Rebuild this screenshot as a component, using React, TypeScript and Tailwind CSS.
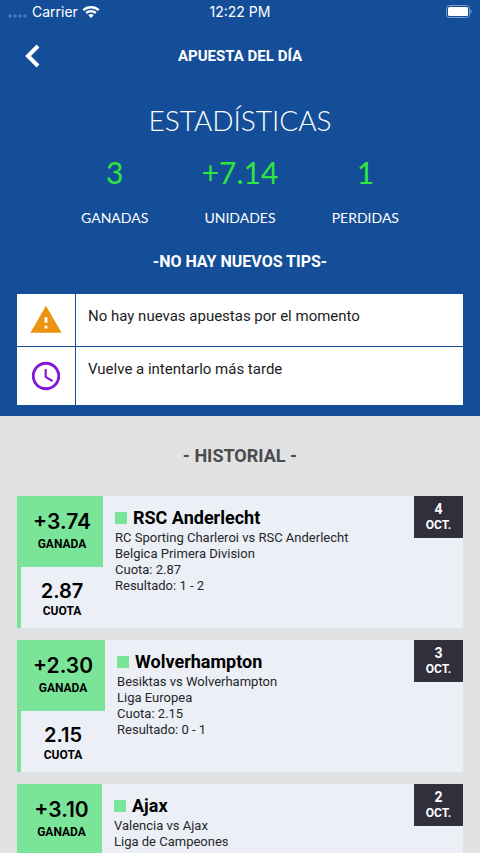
import { MdAccessTime } from "react-icons/md";

const stats = [
  { value: "3", label: "GANADAS" },
  { value: "+7.14", label: "UNIDADES" },
  { value: "1", label: "PERDIDAS" },
];

const history = [
  {
    units: "+3.74",
    odds: "2.87",
    team: "RSC Anderlecht",
    match: "RC Sporting Charleroi vs RSC Anderlecht",
    league: "Belgica Primera Division",
    result: "1 - 2",
    day: "4",
    month: "OCT.",
  },
  {
    units: "+2.30",
    odds: "2.15",
    team: "Wolverhampton",
    match: "Besiktas vs Wolverhampton",
    league: "Liga Europea",
    result: "0 - 1",
    day: "3",
    month: "OCT.",
  },
  {
    units: "+3.10",
    odds: "2.55",
    team: "Ajax",
    match: "Valencia vs Ajax",
    league: "Liga de Campeones",
    result: "0 - 3",
    day: "2",
    month: "OCT.",
  },
];

const StatusBar = () => {
  return (
    <div className="grid h-6 grid-cols-3 items-center px-2 font-[Inter,sans-serif] text-sm text-white">
      <div className="flex items-center">
        <svg className="mt-2 mr-1 h-1 w-5" viewBox="0 0 20 4" fill="#4d7bb8">
          <circle cx="2" cy="2" r="1.7" />
          <circle cx="7" cy="2" r="1.7" />
          <circle cx="12" cy="2" r="1.7" />
          <circle cx="17" cy="2" r="1.7" />
        </svg>
        <span>Carrier</span>
        <svg className="ml-1 h-3.5 w-[18px]" viewBox="0 0 18 14" fill="#fff">
          <path d="M9 1C5.7 1 2.7 2.2.4 4.3l1.7 1.8C4 4.4 6.4 3.5 9 3.5s5 .9 6.9 2.6l1.7-1.8C15.3 2.2 12.3 1 9 1z" />
          <path d="M9 5.1c-2.1 0-4.1.8-5.6 2.2l1.7 1.8c1.1-1 2.4-1.5 3.9-1.5s2.8.5 3.9 1.5l1.7-1.8C13.1 5.9 11.1 5.1 9 5.1z" />
          <path d="M9 9.1c-1 0-2 .4-2.7 1.1L9 13.1l2.7-2.9C11 9.5 10 9.1 9 9.1z" />
        </svg>
      </div>
      <span className="text-center">12:22 PM</span>
      <svg
        className="h-3.5 w-7 justify-self-end"
        viewBox="0 0 28 14"
        fill="none"
      >
        <rect x="2.5" y=".5" width="23" height="12" rx="3" stroke="#7f9fca" />
        <rect x="4" y="2" width="20" height="9" rx="1.5" fill="#fff" />
        <path d="M26.5 4.5v4c.8-.3 1.2-1 1.2-2s-.4-1.7-1.2-2z" fill="#7f9fca" />
      </svg>
    </div>
  );
};

const Header = () => {
  return (
    <header className="grid h-16 grid-cols-[48px_1fr_48px] items-center px-2 text-white">
      <button type="button" aria-label="Volver" className="flex justify-center">
        <svg className="h-6 w-4" viewBox="0 0 16 24" fill="none">
          <path d="M14 2L4 12l10 10" stroke="#fff" strokeWidth="4" />
        </svg>
      </button>
      <h1 className="text-center text-[15px] font-bold">APUESTA DEL DÍA</h1>
    </header>
  );
};

const Stats = () => {
  return (
    <section className="text-center text-white">
      <h2 className="mt-3 font-[Lato,sans-serif] text-[28px] leading-10 font-light">
        ESTADÍSTICAS
      </h2>
      <dl className="mt-2.5 grid grid-cols-3 px-13 font-[Lato,sans-serif]">
        {stats.map((stat) => (
          <div key={stat.label} className="flex flex-col-reverse">
            <dt className="mt-3 text-sm leading-6">{stat.label}</dt>
            <dd className="text-3xl leading-11 text-[#2fe63c]">{stat.value}</dd>
          </div>
        ))}
      </dl>
      <p className="mt-5 text-base leading-6 font-bold">
        -NO HAY NUEVOS TIPS-
      </p>
    </section>
  );
};

const Notices = () => {
  return (
    <ul className="mx-[17px] mt-5 mb-[11px] divide-y divide-[#144e98] bg-white text-[15px] leading-6 text-[#1c1c1e]">
      <li className="flex">
        <div className="flex h-[52px] w-[59px] items-center justify-center border-r border-[#144e98]">
          <svg className="size-[34px]" viewBox="0 0 24 24" fill="#ec9312">
            <path d="M1 21h22L12 2 1 21zm12-3h-2v-2h2v2zm0-4h-2v-4h2v4z" />
          </svg>
        </div>
        <p className="px-3 py-2.5">No hay nuevas apuestas por el momento</p>
      </li>
      <li className="flex">
        <div className="flex h-[58px] w-[59px] items-center justify-center border-r border-[#144e98]">
          <MdAccessTime className="size-[34px] text-[#8316d8]" />
        </div>
        <p className="px-3 py-2.5">Vuelve a intentarlo más tarde</p>
      </li>
    </ul>
  );
};

const HistoryCard = ({ item }: { item: (typeof history)[number] }) => {
  return (
    <li className="flex h-33 items-start border-l-4 border-[#7ae598] bg-[#eceff5] text-black">
      <div className="min-w-[81px] text-center">
        <div className="h-[71px] bg-[#7ae598] px-3 pt-3">
          <p className="font-[Inter,sans-serif] text-[21px] leading-7 font-semibold">
            {item.units}
          </p>
          <p className="text-xs leading-4 font-bold">GANADA</p>
        </div>
        <div className="px-3 pt-2.5">
          <p className="font-[Inter,sans-serif] text-xl leading-7 font-semibold">
            {item.odds}
          </p>
          <p className="text-xs leading-3 font-bold">CUOTA</p>
        </div>
      </div>
      <div className="flex-1 pt-3 pl-3 text-[13px] leading-4 text-[#26262c]">
        <h3 className="mb-0.5 flex items-center gap-1.5 text-lg leading-5 font-bold text-black">
          <span className="size-3 bg-[#7ae598]" />
          {item.team}
        </h3>
        <p>{item.match}</p>
        <p>{item.league}</p>
        <p>Cuota: {item.odds}</p>
        <p>Resultado: {item.result}</p>
      </div>
      <div className="w-[49px] bg-[#30303c] py-[5px] text-center text-white">
        <p className="text-sm leading-4 font-bold">{item.day}</p>
        <p className="text-xs leading-4 font-bold">{item.month}</p>
      </div>
    </li>
  );
};

const App = () => {
  return (
    <div className="h-screen overflow-y-auto bg-[#e1e2e4] font-[Roboto,sans-serif] [scrollbar-width:none]">
      <div className="flow-root bg-[#144e98]">
        <StatusBar />
        <Header />
        <Stats />
        <Notices />
      </div>
      <main className="px-[17px] pt-7 pb-3">
        <h2 className="text-center text-lg leading-6 font-bold text-[#4b4b4d]">
          - HISTORIAL -
        </h2>
        <ul className="mt-7 flex flex-col gap-3">
          {history.map((item) => (
            <HistoryCard key={item.team} item={item} />
          ))}
        </ul>
      </main>
    </div>
  );
};

export default App;
